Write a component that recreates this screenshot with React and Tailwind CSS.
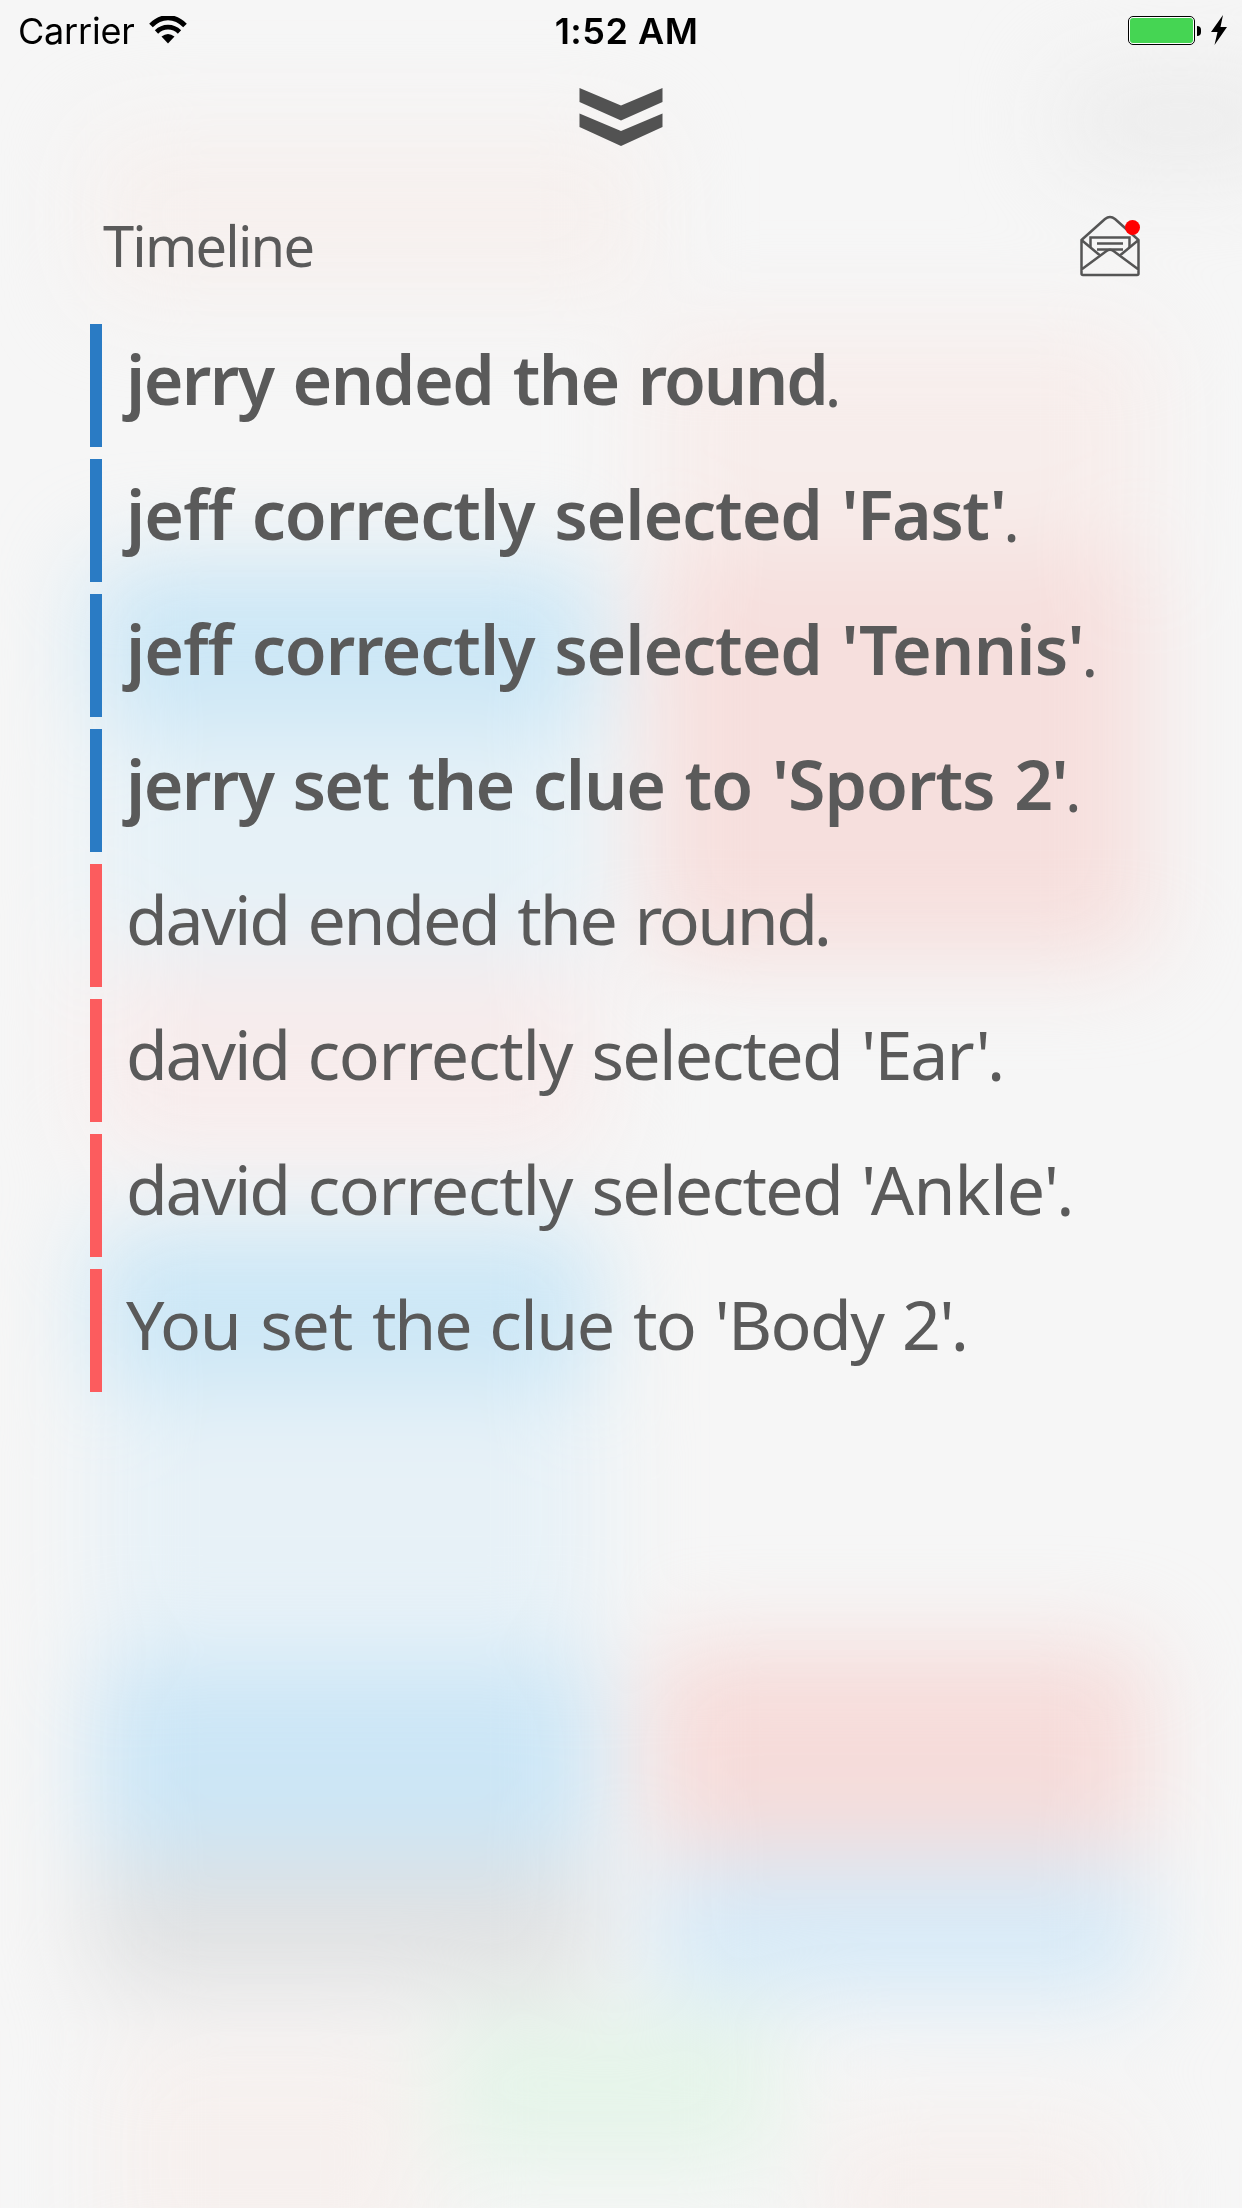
const BLUE = 'bg-[#2a7bc4]';
const RED = 'bg-[#fc5c5e]';

const EVENTS = [
  { text: 'jerry ended the round', bar: BLUE, unread: true },
  { text: "jeff correctly selected 'Fast'", bar: BLUE, unread: true },
  { text: "jeff correctly selected 'Tennis'", bar: BLUE, unread: true },
  { text: "jerry set the clue to 'Sports 2'", bar: BLUE, unread: true },
  { text: 'david ended the round', bar: RED },
  { text: "david correctly selected 'Ear'", bar: RED },
  { text: "david correctly selected 'Ankle'", bar: RED },
  { text: "You set the clue to 'Body 2'", bar: RED },
];

const UNREAD_TRACKING = {
  jerry: 'tracking-[-1.6px]',
  jeff: 'tracking-[-0.9px]',
  ended: 'tracking-[-1.4px]',
  the: 'tracking-[-1.6px]',
  round: 'tracking-[-2.1px]',
  correctly: 'tracking-[-1px]',
  selected: 'tracking-[-1.1px]',
  set: 'tracking-[-1.6px]',
  clue: 'tracking-[-1.1px]',
  to: 'tracking-[-0.9px]',
  "'Fast'": 'tracking-[-1.5px]',
  "'Tennis'": 'tracking-[-0.8px]',
  "'Sports": 'tracking-[-1px]',
  "2'": 'tracking-[-1.6px]',
};

const READ_TRACKING = {
  david: 'tracking-[-2.2px]',
  You: 'tracking-[-1.2px]',
  ended: 'tracking-[-2.2px]',
  the: 'tracking-[-2.1px]',
  round: 'tracking-[-2.5px]',
  correctly: 'tracking-[-1.3px]',
  selected: 'tracking-[-1.7px]',
  set: 'tracking-[-1.1px]',
  clue: 'tracking-[-1.5px]',
  to: 'tracking-[-1.6px]',
  "'Ear'": 'tracking-[-1.9px]',
  "'Ankle'": 'tracking-[-0.8px]',
  "'Body": 'tracking-[-1.7px]',
  "2'": 'tracking-[-1.8px]',
};

const BLOBS = [
  'left-[90px] top-[130px] w-[560px] h-[170px] bg-[#f6f0ee]',
  'left-[1060px] top-[70px] w-[240px] h-[100px] bg-[#ececec]',
  'left-[90px] top-[560px] w-[510px] h-[170px] bg-[#cce7f6]',
  'left-[90px] top-[730px] w-[510px] h-[225px] bg-[#e6f1f7]',
  'left-[90px] top-[955px] w-[510px] h-[200px] bg-[#f7ecec]',
  'left-[90px] top-[1225px] w-[510px] h-[165px] bg-[#cce7f6]',
  'left-[90px] top-[1390px] w-[510px] h-[255px] bg-[#e7f1f7]',
  'left-[90px] top-[1655px] w-[510px] h-[205px] bg-[#cce6f6]',
  'left-[90px] top-[1860px] w-[510px] h-[130px] bg-[#e0e1e2]',
  'left-[650px] top-[330px] w-[500px] h-[220px] bg-[#f7edeb]',
  'left-[650px] top-[550px] w-[500px] h-[410px] bg-[#f6dfdd]',
  'left-[650px] top-[1645px] w-[500px] h-[210px] bg-[#f6dcda]',
  'left-[650px] top-[1855px] w-[500px] h-[145px] bg-[#d7eaf7]',
  'left-[440px] top-[2010px] w-[340px] h-[160px] bg-[#e5f4e9]',
  'left-[110px] top-[2040px] w-[320px] h-[240px] bg-[#f6f0ee]',
  'left-[820px] top-[2120px] w-[310px] h-[160px] bg-[#f6efed]',
];

function StatusBar() {
  return (
    <header className="flex h-[62px] items-center px-[18px] text-black font-['Inter']">
      <div className="flex flex-1 items-center gap-[15px]">
        <span className="text-[36px] leading-none tracking-[-0.2px]">Carrier</span>
        <svg width="38" height="28" viewBox="0 0 38 28" fill="none" className="-ml-[1px] -mt-[3px]">
          <path d="M2 9.5C12-1 26-1 36 9.5" stroke="#000" strokeWidth="5" />
          <path d="M7.5 16C14 9.500 24 9.500 30.500 16" stroke="#000" strokeWidth="4.600" />
          <path d="M12.500 20.500Q19 15.500 25.500 20.500L19 27.500Z" fill="#000" />
        </svg>
      </div>
      <span className="ml-[11px] text-[36px] font-semibold leading-none tracking-[0.5px]">1:52 AM</span>
      <div className="flex flex-1 items-center justify-end">
        <div className="-mt-[1px] flex h-[29px] w-[67px] rounded-[5px] border border-black bg-white p-[1px]">
          <div className="flex-1 rounded-[3px] bg-[#45d553]" />
        </div>
        <div className="ml-[2px] h-[10px] w-[4px] rounded-r-full bg-black" />
        <svg width="16" height="30" viewBox="0 0 16 30" className="-mr-[3px] -mt-[3px] ml-[10px]">
          <path d="M12 0L0 17H6.500L3.500 30L16 12H9.500Z" fill="#000" />
        </svg>
      </div>
    </header>
  );
}

function Envelope() {
  return (
    <svg width="60" height="62" viewBox="0 0 60 62" fill="none" stroke="#555" strokeWidth="2.500">
      <path
        d="M1.500 25V58.500Q1.500 60 3 60H57Q58.500 60 58.500 58.500V25L35 4Q30 0 25 4L1.500 25L19.500 40M58.500 25L40.500 40M1.500 54.500L26.500 36Q30 33.500 33.500 36L58.500 54.500"
        strokeLinejoin="round"
      />
      <path d="M10.500 32.500V22.500H49.500V32.500M17 28.500H43M17 34.500H43" />
    </svg>
  );
}

function EventText({ text, unread }) {
  const tracking = unread ? UNREAD_TRACKING : READ_TRACKING;
  const words = text.split(' ');
  return (
    <p
      className={`whitespace-nowrap pt-[5px] text-[68px] leading-[100px] ${
        unread ? 'font-semibold [word-spacing:3px]' : '[word-spacing:3px]'
      }`}
    >
      {words.map((word, i) => (
        <span key={word} className={tracking[word]}>
          {word}
          {i < words.length - 1 ? ' ' : ''}
        </span>
      ))}
      <span
        className={
          unread
            ? '-ml-[2px] inline-block translate-y-[2px] text-[62px] leading-none font-normal'
            : '-ml-[2px] inline-block translate-y-[1px] leading-none'
        }
      >
        .
      </span>
    </p>
  );
}

export default function App() {
  return (
    <div className="relative isolate h-[2208px] w-[1242px] overflow-hidden bg-[#f6f6f6] text-[#5a5a5a] font-['Noto_Sans',sans-serif]">
      <div className="absolute inset-0 -z-10 blur-[46px]">
        {BLOBS.map((blob) => (
          <div key={blob} className={`absolute rounded-[30px] ${blob}`} />
        ))}
      </div>
      <StatusBar />
      <div className="flex h-[154px] justify-center pt-[26px]">
        <svg width="84" height="58" viewBox="0 0 84 58" fill="#525252">
          <path d="M0.500 0L42 17.500L83.500 0V14L42 32.500L0.500 14Z" />
          <path d="M0.500 25.500L42 43L83.500 25.500V39L42 58L0.500 39Z" />
        </svg>
      </div>
      <div className="flex h-[108px] justify-between pl-[103px] pr-[102px]">
        <h1 className="mt-[-10px] text-[56px] font-normal leading-[78px] tracking-[-1.8px]">Timeline</h1>
        <button className="relative -mt-[1px] h-[62px] w-[60px]" aria-label="Messages">
          <Envelope />
          <span className="absolute left-[45px] top-[5px] size-[15px] rounded-full bg-[#ff0000]" />
        </button>
      </div>
      <ul className="flex flex-col gap-[12px] px-[90px]">
        {EVENTS.map((event) => (
          <li key={event.text} className="flex h-[123px] gap-[24px]">
            <span className={`w-[12px] shrink-0 ${event.bar}`} />
            <EventText text={event.text} unread={event.unread} />
          </li>
        ))}
      </ul>
    </div>
  );
}
